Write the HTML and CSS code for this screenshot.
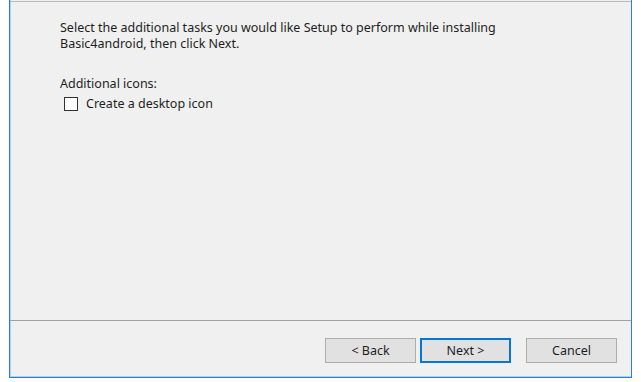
FILE: index.html
```html
<!DOCTYPE html>
<html lang="en">
<head>
    <meta charset="UTF-8">
    <title>Setup - Basic4android</title>
    <link rel="stylesheet" href="styles.css">
</head>
<body>
    <div class="window">
        <div class="page">
            <p class="intro">Select the additional tasks you would like Setup to perform while installing<br>Basic4android, then click Next.</p>
            <div class="group-label">Additional icons:</div>
            <label class="check">
                <span class="box"></span>
                <span>Create a desktop icon</span>
            </label>
        </div>
        <div class="footer">
            <button class="btn">&lt; Back</button>
            <button class="btn default">Next &gt;</button>
            <button class="btn cancel">Cancel</button>
        </div>
    </div>
</body>
</html>
```

FILE: styles.css
```css
body {
    margin: 0;
    background: #fff;
    font-family: 'Segoe UI', 'Noto Sans', 'Open Sans', sans-serif;
    font-size: 12.5px;
    color: #1e1e1e;
}
.window {
    margin-left: 9px;
    width: 621px;
    height: 377px;
    display: flex;
    flex-direction: column;
    background: #f0f0f0;
    border-left: 1px solid #2a7fd0;
    border-right: 1px solid #2a7fd0;
    border-bottom: 1px solid #2a7fd0;
    box-shadow: inset 1px 0 0 #a9d3f5, inset 0 -1px 0 #a9d3f5;
}
.page {
    flex: 1;
    padding: 18px 0 0 50px;
    border-top: 1px solid #b9b9b9;
    border-bottom: 1px solid #a0a0a0;
    margin-top: 1px;
}
.intro {
    margin: 0;
    line-height: 16px;
}
.group-label {
    margin-top: 24px;
    line-height: 16px;
}
.check {
    display: flex;
    align-items: center;
    gap: 8px;
    margin-top: 4px;
    margin-left: 4px;
    line-height: 16px;
}
.box {
    width: 12px;
    height: 12px;
    border: 1px solid #333;
    background: #fff;
}
.footer {
    height: 56px;
    display: flex;
    justify-content: flex-end;
    align-items: flex-start;
    padding: 17px 14px 0 0;
    box-sizing: border-box;
}
.btn {
    width: 91px;
    height: 25px;
    margin-left: 4px;
    background: #e1e1e1;
    border: 1px solid #adadad;
    font: inherit;
    color: #1e1e1e;
    padding: 0;
}
.btn.default {
    border: 2px solid #0078d7;
}
.btn.cancel {
    margin-left: 15px;
}
```
